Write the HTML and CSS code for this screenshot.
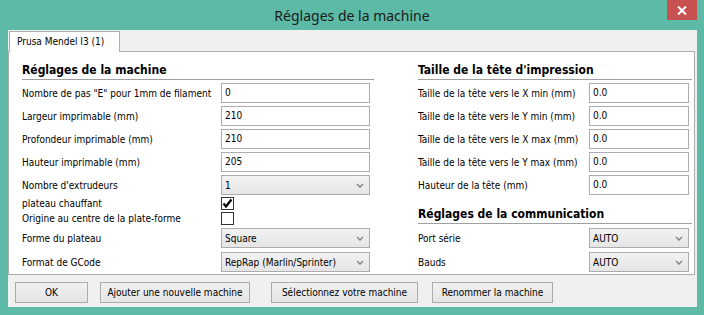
FILE: index.html
```html
<!DOCTYPE html>
<html lang="fr">
<head>
<meta charset="utf-8">
<title>Réglages de la machine</title>
<link rel="stylesheet" href="styles.css">
</head>
<body>
<div class="window">
  <div class="titlebar">
    <div></div>
    <div class="title">Réglages de la machine</div>
    <div class="close">
      <svg width="10" height="9" viewBox="0 0 10 9"><path d="M1 0.5 L9 8.5 M9 0.5 L1 8.5" stroke="#fff" stroke-width="2" fill="none"/></svg>
    </div>
  </div>
  <div class="client">
    <div class="tabs"><div class="tab">Prusa Mendel I3 (1)</div></div>
    <div class="panel">
      <div class="col col-left">
        <div class="heading">Réglages de la machine</div>
        <div class="row"><span class="label">Nombre de pas "E" pour 1mm de filament</span><div class="field">0</div></div>
        <div class="row"><span class="label">Largeur imprimable (mm)</span><div class="field">210</div></div>
        <div class="row"><span class="label">Profondeur imprimable (mm)</span><div class="field">210</div></div>
        <div class="row"><span class="label">Hauteur imprimable (mm)</span><div class="field">205</div></div>
        <div class="row"><span class="label">Nombre d'extrudeurs</span><div class="select"><span>1</span><svg class="chev" width="8" height="5" viewBox="0 0 8 5"><path d="M1 1 L4 4 L7 1" stroke="#8a8a8a" stroke-width="1.6" fill="none"/></svg></div></div>
        <div class="row row-check"><span class="label">plateau chauffant</span><div class="check"><svg width="11" height="11" viewBox="0 0 11 11"><path d="M1.5 5.5 L4 8.5 L9.5 1.5" stroke="#000" stroke-width="2.2" fill="none"/></svg></div></div>
        <div class="row row-check"><span class="label">Origine au centre de la plate-forme</span><div class="check"></div></div>
        <div class="row"><span class="label">Forme du plateau</span><div class="select"><span>Square</span><svg class="chev" width="8" height="5" viewBox="0 0 8 5"><path d="M1 1 L4 4 L7 1" stroke="#8a8a8a" stroke-width="1.6" fill="none"/></svg></div></div>
        <div class="row row-last"><span class="label">Format de GCode</span><div class="select"><span>RepRap (Marlin/Sprinter)</span><svg class="chev" width="8" height="5" viewBox="0 0 8 5"><path d="M1 1 L4 4 L7 1" stroke="#8a8a8a" stroke-width="1.6" fill="none"/></svg></div></div>
      </div>
      <div class="col col-right">
        <div class="heading">Taille de la tête d'impression</div>
        <div class="row"><span class="label">Taille de la tête vers le X min (mm)</span><div class="field">0.0</div></div>
        <div class="row"><span class="label">Taille de la tête vers le Y min (mm)</span><div class="field">0.0</div></div>
        <div class="row"><span class="label">Taille de la tête vers le X max (mm)</span><div class="field">0.0</div></div>
        <div class="row"><span class="label">Taille de la tête vers le Y max (mm)</span><div class="field">0.0</div></div>
        <div class="row"><span class="label">Hauteur de la tête (mm)</span><div class="field">0.0</div></div>
        <div class="heading heading-second">Réglages de la communication</div>
        <div class="row row-sel1"><span class="label">Port série</span><div class="select"><span>AUTO</span><svg class="chev" width="8" height="5" viewBox="0 0 8 5"><path d="M1 1 L4 4 L7 1" stroke="#8a8a8a" stroke-width="1.6" fill="none"/></svg></div></div>
        <div class="row row-last"><span class="label">Bauds</span><div class="select"><span>AUTO</span><svg class="chev" width="8" height="5" viewBox="0 0 8 5"><path d="M1 1 L4 4 L7 1" stroke="#8a8a8a" stroke-width="1.6" fill="none"/></svg></div></div>
      </div>
    </div>
    <div class="buttons">
      <div class="btn btn-ok">OK</div>
      <div class="btn btn-add">Ajouter une nouvelle machine</div>
      <div class="btn btn-select">Sélectionnez votre machine</div>
      <div class="btn btn-rename">Renommer la machine</div>
    </div>
  </div>
</div>
</body>
</html>
```

FILE: styles.css
```css
html, body {
  margin: 0;
  padding: 0;
}
body {
  background: #5cbaa6;
  font-family: "DejaVu Sans Condensed", "Liberation Sans", sans-serif;
  font-size: 10px;
  color: #000;
}
.window {
  width: 704px;
  height: 315px;
  display: flex;
  flex-direction: column;
}
.titlebar {
  height: 30px;
  display: grid;
  grid-template-columns: 1fr auto 1fr;
}
.title {
  align-self: center;
  font-family: "Noto Sans", sans-serif;
  font-size: 14px;
  color: #1b1b1b;
  padding-top: 1px;
}
.close {
  justify-self: end;
  align-self: start;
  width: 30px;
  height: 20px;
  margin-right: 7px;
  background: #c75050;
  display: flex;
  align-items: center;
  justify-content: center;
}
.client {
  margin: 0 7px 0 8px;
  height: 277px;
  background: #f0f0f0;
  display: flex;
  flex-direction: column;
}
.tabs {
  height: 21px;
  display: flex;
  align-items: flex-end;
  padding-left: 1px;
}
.tab {
  position: relative;
  z-index: 1;
  box-sizing: border-box;
  width: 111px;
  height: 21px;
  margin-bottom: -1px;
  border: 1px solid #acacac;
  border-bottom: none;
  background: #fff;
  padding-left: 7px;
  line-height: 20px;
}
.panel {
  box-sizing: border-box;
  width: 687px;
  height: 224px;
  border: 1px solid #acacac;
  background: #fff;
  display: flex;
  gap: 44px;
  padding: 9px 2px 0 13px;
}
.col {
  display: flex;
  flex-direction: column;
}
.col-left { width: 352px; }
.col-right { width: 274px; }
.heading {
  height: 18px;
  line-height: 18px;
  border-bottom: 1px solid #a0a0a0;
  font-weight: bold;
  font-size: 12px;
}
.heading-second {
  margin-top: 10px;
}
.row {
  display: grid;
  height: 20px;
  margin-top: 3px;
  align-items: center;
  white-space: nowrap;
}
.col-left .row { grid-template-columns: 199px 149px; }
.col-right .row { grid-template-columns: 171px 100px; }
.row-check {
  height: 13px;
  margin-top: 2px;
}
.row-last { margin-top: 4px; }
.row-sel1 { margin-top: 4px; }
.field {
  box-sizing: border-box;
  height: 20px;
  border: 1px solid #abadb3;
  background: #fff;
  padding-left: 3px;
  line-height: 18px;
}
.select {
  box-sizing: border-box;
  height: 20px;
  border: 1px solid #acacac;
  background: linear-gradient(#f2f2f2, #e5e5e5);
  padding: 0 5px 0 3px;
  display: flex;
  align-items: center;
  justify-content: space-between;
}
.chev { display: block; }
.check {
  box-sizing: border-box;
  width: 13px;
  height: 13px;
  border: 1px solid #333;
  background: #fff;
  display: flex;
  align-items: center;
  justify-content: center;
}
.check svg { display: block; }
.buttons {
  display: flex;
  margin-top: 7px;
}
.btn {
  box-sizing: border-box;
  height: 21px;
  border: 1px solid #acacac;
  background: linear-gradient(#f0f0f0, #e5e5e5);
  display: flex;
  align-items: center;
  justify-content: center;
  white-space: nowrap;
}
.btn-ok { width: 73px; margin-left: 7px; }
.btn-add { width: 150px; margin-left: 12px; }
.btn-select { width: 147px; margin-left: 21px; }
.btn-rename { width: 121px; margin-left: 14px; }
```
